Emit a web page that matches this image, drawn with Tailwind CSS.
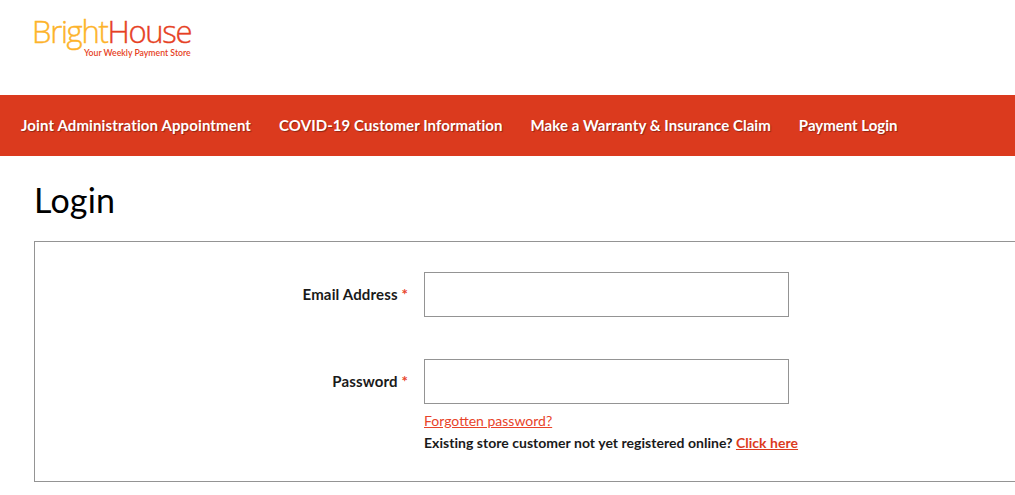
<!DOCTYPE html>
<html lang="en">
<head>
    <meta charset="UTF-8">
    <title>Login</title>
    <script src="https://cdn.jsdelivr.net/npm/@tailwindcss/browser@4"></script>
</head>
<body class="bg-white font-['Lato','Liberation_Sans',sans-serif] text-[#1a1a1a] overflow-hidden h-[495px]">
    <!-- Logo -->
    <header class="h-[95px] pl-[32px] pt-[11px]">
        <div class="w-[160px] flex flex-col font-['Open_Sans',sans-serif]">
            <div class="text-[31px] leading-[40px] tracking-[-1.3px] font-light [-webkit-text-stroke:0.4px]"><span class="text-[#fdb32a]">Bright</span><span class="text-[#e63f24]">House</span></div>
            <div class="text-[8.7px] leading-[10px] -mt-[3px] pl-[52px] text-[#e63f24] whitespace-nowrap font-['Lato',sans-serif] font-semibold">Your Weekly Payment Store</div>
        </div>
    </header>

    <!-- Nav -->
    <nav class="h-[61px] bg-[#db3a1e] flex items-center pl-[21px] gap-[28px] pb-[1px] text-white text-[15px] font-bold [text-shadow:1px_1px_1px_rgba(0,0,0,0.35)] whitespace-nowrap">
        <a href="#" class="tracking-[0.12px]">Joint Administration Appointment</a>
        <a href="#" class="tracking-[0.07px]">COVID-19 Customer Information</a>
        <a href="#" class="tracking-[0.05px]">Make a Warranty &amp; Insurance Claim</a>
        <a href="#">Payment Login</a>
    </nav>

    <main class="pl-[34px]">
        <h1 class="text-[34px] tracking-[0.2px] leading-[44px] text-black mt-[22px] mb-[19px]">Login</h1>

        <!-- Login form -->
        <form class="w-[1100px] h-[241px] border border-[#949494] pt-[30px]">
            <div class="flex items-center gap-[16px]">
                <label class="w-[373px] text-right text-[15px] tracking-[0.15px] font-bold">Email Address <span class="text-[#e8432a]">*</span></label>
                <input type="text" class="w-[365px] h-[45px] border border-[#949494] bg-white">
            </div>
            <div class="flex items-center gap-[16px] mt-[42px]">
                <label class="w-[373px] text-right text-[15px] tracking-[0.15px] font-bold">Password <span class="text-[#e8432a]">*</span></label>
                <input type="password" class="w-[365px] h-[45px] border border-[#949494] bg-white">
            </div>
            <div class="pl-[389px] text-[14px] leading-[22px] mt-[6px]">
                <a href="#" class="block text-[#e8432a] underline">Forgotten password?</a>
                <p class="font-bold tracking-[0.03px]">Existing store customer not yet registered online? <a href="#" class="text-[#dc3b1e] underline">Click here</a></p>
            </div>
        </form>
    </main>
</body>
</html>
